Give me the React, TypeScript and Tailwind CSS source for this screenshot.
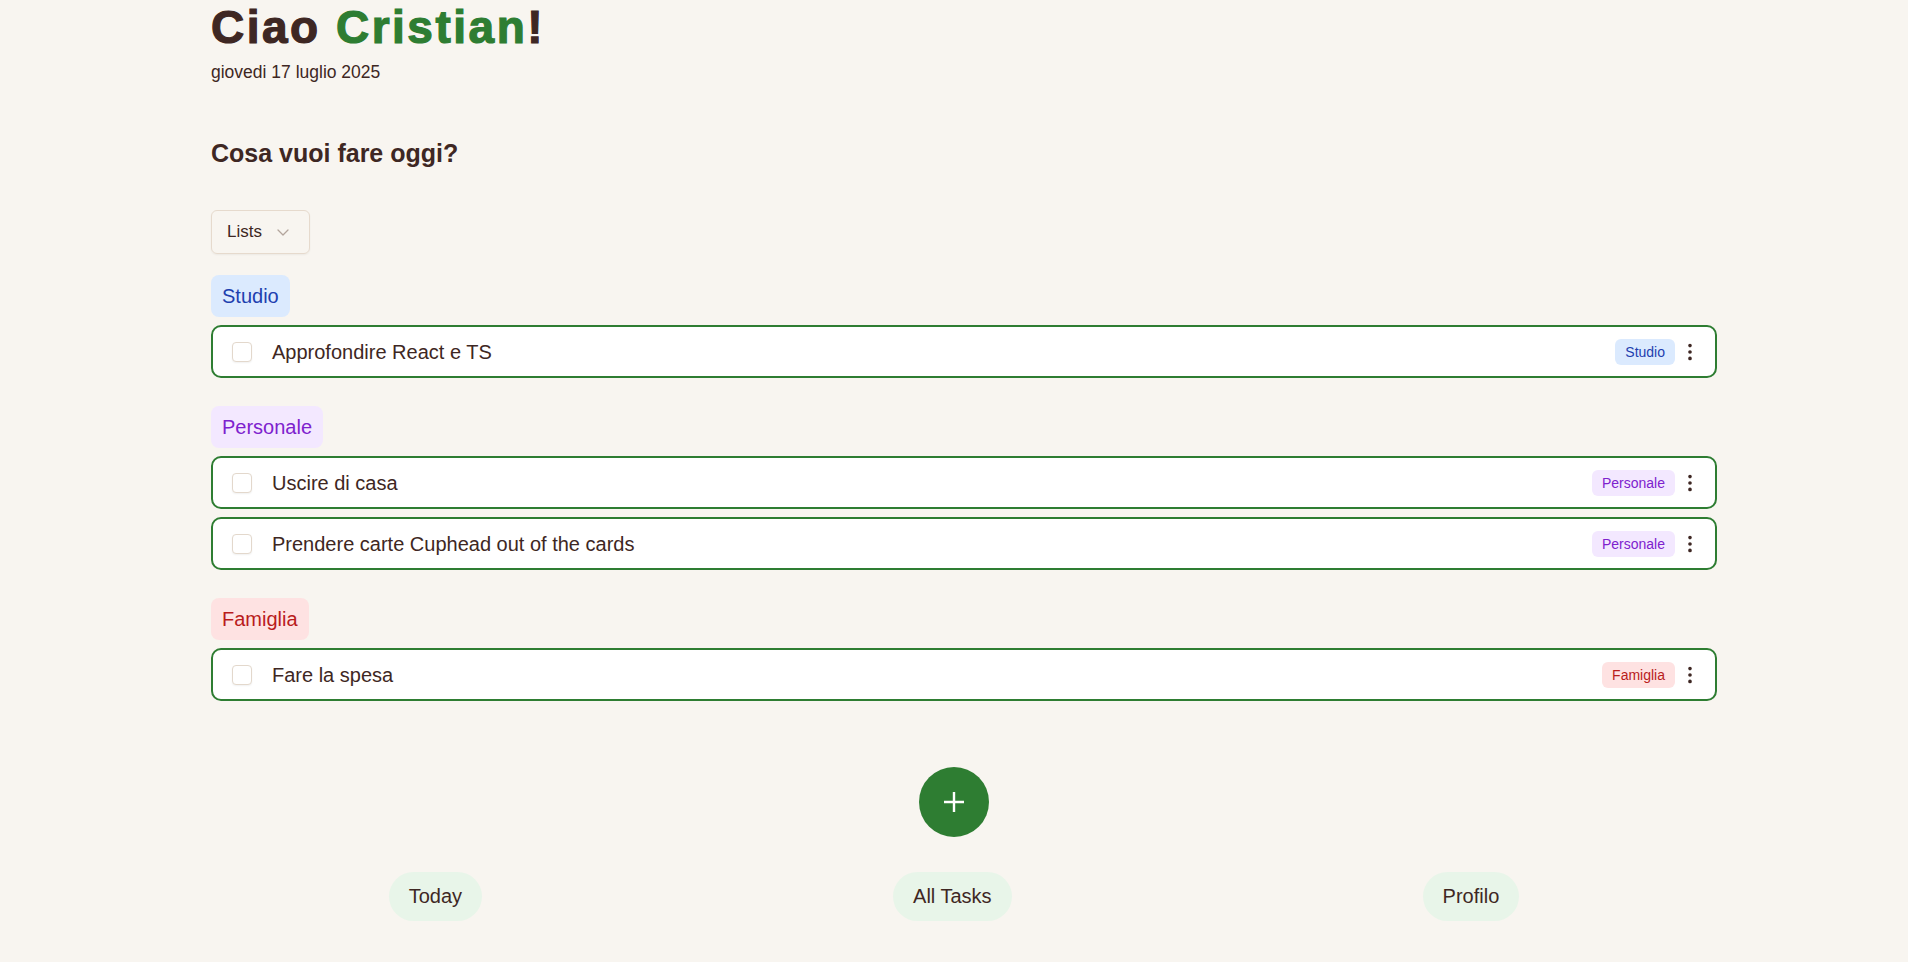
import React, { useState } from "react";
import { EllipsisVertical } from "lucide-react";

type Task = { id: number; title: string; list: string };

const listStyles: Record<string, { badge: string; tag: string }> = {
  Studio: {
    badge: "bg-[#dbeafe] text-[#1e40af]",
    tag: "bg-[#dbeafe] text-[#1e40af]",
  },
  Personale: {
    badge: "bg-[#f3e8ff] text-[#7e22ce]",
    tag: "bg-[#f3e8ff] text-[#7e22ce]",
  },
  Famiglia: {
    badge: "bg-[#fee2e2] text-[#b91c1c]",
    tag: "bg-[#fee2e2] text-[#b91c1c]",
  },
};

const initialTasks: Task[] = [
  { id: 1, title: "Approfondire React e TS", list: "Studio" },
  { id: 2, title: "Uscire di casa", list: "Personale" },
  { id: 3, title: "Prendere carte Cuphead out of the cards", list: "Personale" },
  { id: 4, title: "Fare la spesa", list: "Famiglia" },
];

function TaskRow({ task, done, onToggle }: { task: Task; done: boolean; onToggle: () => void }) {
  return (
    <div className="flex h-[53px] items-center rounded-[10px] border-2 border-[#2e7d32] bg-white pl-[19px] pr-[14px]">
      <button
        onClick={onToggle}
        className={`h-5 w-5 shrink-0 rounded-[4px] border border-[#e3d8cc] shadow-[0_1px_2px_rgba(0,0,0,0.06)] ${
          done ? "bg-[#2e7d32]" : "bg-white"
        }`}
      />
      <span className="ml-5 flex-1 text-[20px] text-[#3e2723]">{task.title}</span>
      <span className={`rounded-md px-[10px] py-[3px] text-sm leading-5 ${listStyles[task.list].tag}`}>
        {task.list}
      </span>
      <button className="ml-1 text-[#3e2723]">
        <EllipsisVertical size={22} strokeWidth={2} />
      </button>
    </div>
  );
}

export default function App() {
  const [tasks] = useState<Task[]>(initialTasks);
  const [done, setDone] = useState<Record<number, boolean>>({});

  const lists = ["Studio", "Personale", "Famiglia"];

  return (
    <div className="min-h-screen bg-[#f8f5f0] font-['Liberation_Sans',Arial,sans-serif] text-[#3e2723]">
      <div className="w-[1717px] pl-[211px] pt-1">
        {/* Header */}
        <h1 className="text-[46px] font-bold leading-none tracking-[2.5px] [-webkit-text-stroke:1.2px_currentColor]">
          Ciao <span className="text-[#2e7d32]">Cristian</span>!
        </h1>
        <p className="mt-[10px] text-[17.5px] leading-6">giovedi 17 luglio 2025</p>

        <h2 className="mt-[53px] text-[25px] font-bold leading-8">Cosa vuoi fare oggi?</h2>

        {/* Filter */}
        <button className="mt-[41px] flex h-[44px] items-center gap-[15px] rounded-md border border-[#e6dacd] pl-[15px] pr-5 text-[17px] shadow-[0_1px_2px_rgba(0,0,0,0.05)]">
          Lists
          <svg width="12" height="7" viewBox="0 0 12 7" fill="none">
            <path d="M1 1l5 5 5-5" stroke="#b3a59c" strokeWidth="1.3" strokeLinecap="round" strokeLinejoin="round" />
          </svg>
        </button>

        {/* Lists */}
        <div className="mt-[21px] flex flex-col gap-[28px]">
          {lists.map((list) => (
            <section key={list} className="flex flex-col gap-2">
              <div className="flex">
                <span className={`flex h-[42px] items-center rounded-lg px-[11px] text-xl ${listStyles[list].badge}`}>
                  {list}
                </span>
              </div>
              {tasks
                .filter((t) => t.list === list)
                .map((t) => (
                  <TaskRow
                    key={t.id}
                    task={t}
                    done={!!done[t.id]}
                    onToggle={() => setDone({ ...done, [t.id]: !done[t.id] })}
                  />
                ))}
            </section>
          ))}
        </div>
      </div>

      {/* Add button */}
      <div className="mt-[66px] flex justify-center">
        <button className="flex h-[70px] w-[70px] items-center justify-center rounded-full bg-[#2e7d32]">
          <svg width="22" height="22" viewBox="0 0 22 22">
            <path d="M11 1v20M1 11h20" stroke="white" strokeWidth="2.4" />
          </svg>
        </button>
      </div>

      {/* Bottom nav */}
      <nav className="mt-[35px] flex justify-center gap-[411px] pb-10">
        {["Today", "All Tasks", "Profilo"].map((label) => (
          <button key={label} className="rounded-full bg-[#e8f5e9] px-5 py-3 text-[20px] leading-[25px] text-[#3e2723]">
            {label}
          </button>
        ))}
      </nav>
    </div>
  );
}
